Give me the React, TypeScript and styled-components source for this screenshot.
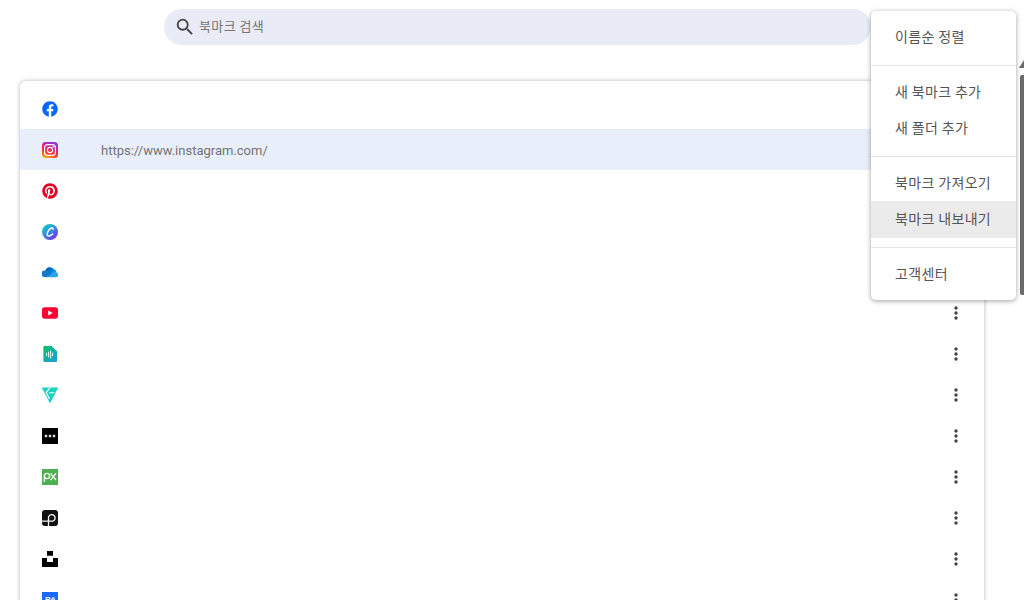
import React from "react";
import styled, { createGlobalStyle } from "styled-components";
import { FaFacebook, FaPinterest } from "react-icons/fa";

const Global = createGlobalStyle`
  html, body { margin: 0; padding: 0; background: #fff; overflow: hidden; }
  body { font-family: "Roboto", "Noto Sans CJK KR", sans-serif; }
`;

const Page = styled.div`
  position: relative;
  width: 1024px;
  height: 600px;
  overflow: hidden;
  background: #fff;
`;

const Header = styled.header`
  display: flex;
  padding: 9px 153px 0 164px;
  height: 81px;
  box-sizing: border-box;
`;

const SearchBar = styled.div`
  flex: 1;
  height: 36px;
  border-radius: 18px;
  background: #e9ecf6;
  display: flex;
  align-items: center;
  gap: 3px;
  padding-left: 10px;
`;

const SearchLabel = styled.span`
  color: #757575;
  font: 400 13px/18px "Noto Sans CJK KR", sans-serif;
  letter-spacing: 0.4px;
  padding-bottom: 3px;
`;

const SearchIcon = styled.svg`
  width: 22px;
  height: 22px;
  fill: #444;
`;

const Card = styled.main`
  margin-left: 20px;
  width: 964px;
  height: 560px;
  padding-top: 7.6px;
  box-sizing: border-box;
  background: #fff;
  border-radius: 6px 6px 0 0;
  box-shadow: 0 0 4px rgba(0, 0, 0, 0.3);
`;

const Row = styled.div<{ $active?: boolean }>`
  display: flex;
  align-items: center;
  height: 40.9px;
  padding: 0 20px 0 22px;
  background: ${(p) => (p.$active ? "#e8eefa" : "transparent")};
`;

const IconSlot = styled.span`
  display: flex;
  width: 16px;
  height: 16px;
  flex: none;
  svg { width: 16px; height: 16px; display: block; }
`;

const Url = styled.span`
  margin-left: 43px;
  padding-top: 1px;
  font: 400 13px "Roboto", sans-serif;
  color: #747474;
`;

const Kebab = styled.svg`
  margin-left: auto;
  width: 16px;
  height: 16px;
  fill: #444;
`;

const Menu = styled.nav`
  position: absolute;
  left: 871px;
  top: 11px;
  width: 145px;
  padding: 8px 0;
  box-sizing: border-box;
  background: #fff;
  border-radius: 5px;
  box-shadow: 0 1px 5px rgba(0, 0, 0, 0.38);
`;

const MenuItem = styled.div<{ $hover?: boolean }>`
  height: 36.5px;
  padding-left: 24px;
  white-space: nowrap;
  font: 400 14px/34.5px "Noto Sans CJK KR", sans-serif;
  letter-spacing: 0.35px;
  color: #555;
  background: ${(p) => (p.$hover ? "#ebebeb" : "transparent")};
`;

const Divider = styled.hr`
  border: 0;
  height: 1px;
  background: #e3e3e3;
  margin: 9px 0 8px;
`;

const ScrollThumb = styled.div`
  position: absolute;
  left: 1020px;
  top: 75px;
  width: 4px;
  height: 220px;
  background: #6b6b6b;
  border-radius: 2px 0 0 2px;
`;

const ScrollArrow = styled.div`
  position: absolute;
  left: 1019px;
  top: 60px;
  width: 0;
  height: 0;
  border-left: 5px solid transparent;
  border-right: 5px solid transparent;
  border-bottom: 8px solid #6b6b6b;
`;

const BehanceMark = styled.span`
  display: block;
  width: 16px;
  height: 16px;
  background: #1769ff;
  color: #fff;
  font: 700 8px/16px "Liberation Sans", sans-serif;
  text-align: center;
`;

const Instagram = () => (
  <svg viewBox="0 0 16 16">
    <defs>
      <linearGradient id="ig" x1="0.2" y1="1" x2="0.6" y2="0">
        <stop offset="0" stopColor="#fdb515" />
        <stop offset="0.35" stopColor="#f9372f" />
        <stop offset="0.7" stopColor="#d3209f" />
        <stop offset="1" stopColor="#8a3ad8" />
      </linearGradient>
    </defs>
    <rect width="16" height="16" rx="3.5" fill="url(#ig)" />
    <rect x="2.6" y="2.6" width="10.8" height="10.8" rx="3" fill="none" stroke="#fff" strokeWidth="1.1" />
    <circle cx="8" cy="8" r="2.6" fill="none" stroke="#fff" strokeWidth="1.1" />
    <circle cx="11.3" cy="4.7" r="0.7" fill="#fff" />
  </svg>
);

const Canva = () => (
  <svg viewBox="0 0 16 16">
    <defs>
      <linearGradient id="cv" x1="0.1" y1="0.1" x2="0.8" y2="1">
        <stop offset="0" stopColor="#10cbc4" />
        <stop offset="0.5" stopColor="#3a86e6" />
        <stop offset="1" stopColor="#7d2ae8" />
      </linearGradient>
    </defs>
    <circle cx="8" cy="8" r="8" fill="url(#cv)" />
    <path d="M11 5.4c.2-1.2-.8-1.9-1.8-1.4C7 5 5 8.2 5.2 10.6c.2 2 2.8 2 5.4-.5" fill="none" stroke="#fff" strokeWidth="1.4" strokeLinecap="round" />
  </svg>
);

const OneDrive = () => (
  <svg viewBox="0 1.5 16 16">
    <path d="M3.4 7.6A4.4 4.4 0 0 1 11.4 5.6l-3 4.6-4.8-2z" fill="#0364b8" />
    <path d="M6.2 6.6a4.6 4.6 0 0 1 6-1l-2 5-4.2-2.8z" fill="#0078d4" />
    <path d="M10.8 5.5a4 4 0 0 1 3.8 3.3L9 10.4z" fill="#1490df" />
    <path d="M3 13.6A3.3 3.3 0 0 1 2.6 7c1.8-.4 3 .5 4.4 1.6l3.4 2.4-5 2.6z" fill="#0f78d4" />
    <path d="M3 13.7h11a2.5 2.5 0 0 0 .7-4.8c-1.8-.6-2.8.2-4.3 1.3l-3.6 2.4z" fill="#28a8ea" />
  </svg>
);

const YouTube = () => (
  <svg viewBox="0 0 16 16">
    <rect x="0" y="2.2" width="16" height="11.6" rx="2.8" fill="#ff0033" />
    <path d="M6.2 5.4 10.8 8l-4.6 2.6z" fill="#fff" />
  </svg>
);

const Note = () => (
  <svg viewBox="0 0 16 16">
    <defs>
      <linearGradient id="nt" x1="0" y1="0" x2="1" y2="1">
        <stop offset="0" stopColor="#0cc25f" />
        <stop offset="1" stopColor="#1a9be8" />
      </linearGradient>
    </defs>
    <path d="M1.4 1a1 1 0 0 1 1-1h7.2L15 5.2v9.8a1 1 0 0 1-1 1H2.4a1 1 0 0 1-1-1z" fill="url(#nt)" />
    <path d="M4.6 7.4v2M6.6 6v5M8.6 5v7M10.6 7v2.6" stroke="#dff6f0" strokeWidth="1.1" strokeLinecap="round" />
  </svg>
);

const VectorMark = () => (
  <svg viewBox="0 0 16 16">
    <path d="M0.6 0.4H15.4a.6.6 0 0 1 .5.9L8.6 15.6a.6.6 0 0 1-1.1 0L0.1 1.3a.6.6 0 0 1 .5-.9z" fill="#1fd2c0" />
    <path d="M8.4 0.2 4.2 5.6 7.4 12 M12.4 5.8H7.2" fill="none" stroke="#fff" strokeWidth="1.1" />
  </svg>
);

const DotsSquare = () => (
  <svg viewBox="0 0 16 16">
    <rect width="16" height="16" fill="#000" />
    <rect x="2.8" y="6.8" width="2.4" height="2.4" fill="#ddd" />
    <rect x="6.8" y="6.8" width="2.4" height="2.4" fill="#ddd" />
    <rect x="10.8" y="6.8" width="2.4" height="2.4" fill="#ddd" />
  </svg>
);

const Pixabay = () => (
  <svg viewBox="0 0 16 16">
    <rect width="16" height="16" fill="#4caf50" />
    <circle cx="5" cy="7" r="2.6" fill="none" stroke="#eef8ee" strokeWidth="1.4" />
    <path d="M2.4 7v6M8.6 4.4l5.4 6.6M14 4.4l-5.4 6.6" fill="none" stroke="#eef8ee" strokeWidth="1.4" />
  </svg>
);

const LoopMark = () => (
  <svg viewBox="0 0 16 16">
    <rect width="16" height="16" rx="3" fill="#111" />
    <path d="M0 11.2h9.5a3.3 3.3 0 1 0-3-3.3V16" fill="none" stroke="#f2f2f2" strokeWidth="1.3" />
  </svg>
);

const Unsplash = () => (
  <svg viewBox="0 0 16 16">
    <path d="M5 0h6v4.8H5zM0 7h5v4h6V7h5v9H0z" fill="#000" />
  </svg>
);

const icons: React.ReactNode[] = [
  <FaFacebook color="#0866ff" />,
  <Instagram />,
  <FaPinterest color="#e60023" />,
  <Canva />,
  <OneDrive />,
  <YouTube />,
  <Note />,
  <VectorMark />,
  <DotsSquare />,
  <Pixabay />,
  <LoopMark />,
  <Unsplash />,
  <BehanceMark>Bē</BehanceMark>,
];

export default function App() {
  return (
    <Page>
      <Global />
      <Header>
        <SearchBar>
          <SearchIcon viewBox="0 0 24 24">
            <path d="M15.5 14h-.79l-.28-.27A6.471 6.471 0 0 0 16 9.5 6.5 6.5 0 1 0 9.5 16c1.61 0 3.09-.59 4.23-1.57l.27.28v.79l5 4.99L20.49 19l-4.99-5zm-6 0C7.01 14 5 11.99 5 9.5S7.01 5 9.5 5 14 7.01 14 9.5 11.99 14 9.5 14z" />
          </SearchIcon>
          <SearchLabel>북마크 검색</SearchLabel>
        </SearchBar>
      </Header>
      <Card>
        {icons.map((icon, i) => (
          <Row key={i} $active={i === 1}>
            <IconSlot>{icon}</IconSlot>
            {i === 1 && <Url>https://www.instagram.com/</Url>}
            <Kebab viewBox="0 0 16 16">
              <circle cx="8" cy="3" r="1.7" />
              <circle cx="8" cy="8" r="1.7" />
              <circle cx="8" cy="13" r="1.7" />
            </Kebab>
          </Row>
        ))}
      </Card>
      <ScrollArrow />
      <ScrollThumb />
      <Menu>
        <MenuItem>이름순 정렬</MenuItem>
        <Divider />
        <MenuItem>새 북마크 추가</MenuItem>
        <MenuItem>새 폴더 추가</MenuItem>
        <Divider />
        <MenuItem>북마크 가져오기</MenuItem>
        <MenuItem $hover>북마크 내보내기</MenuItem>
        <Divider />
        <MenuItem>고객센터</MenuItem>
      </Menu>
    </Page>
  );
}
